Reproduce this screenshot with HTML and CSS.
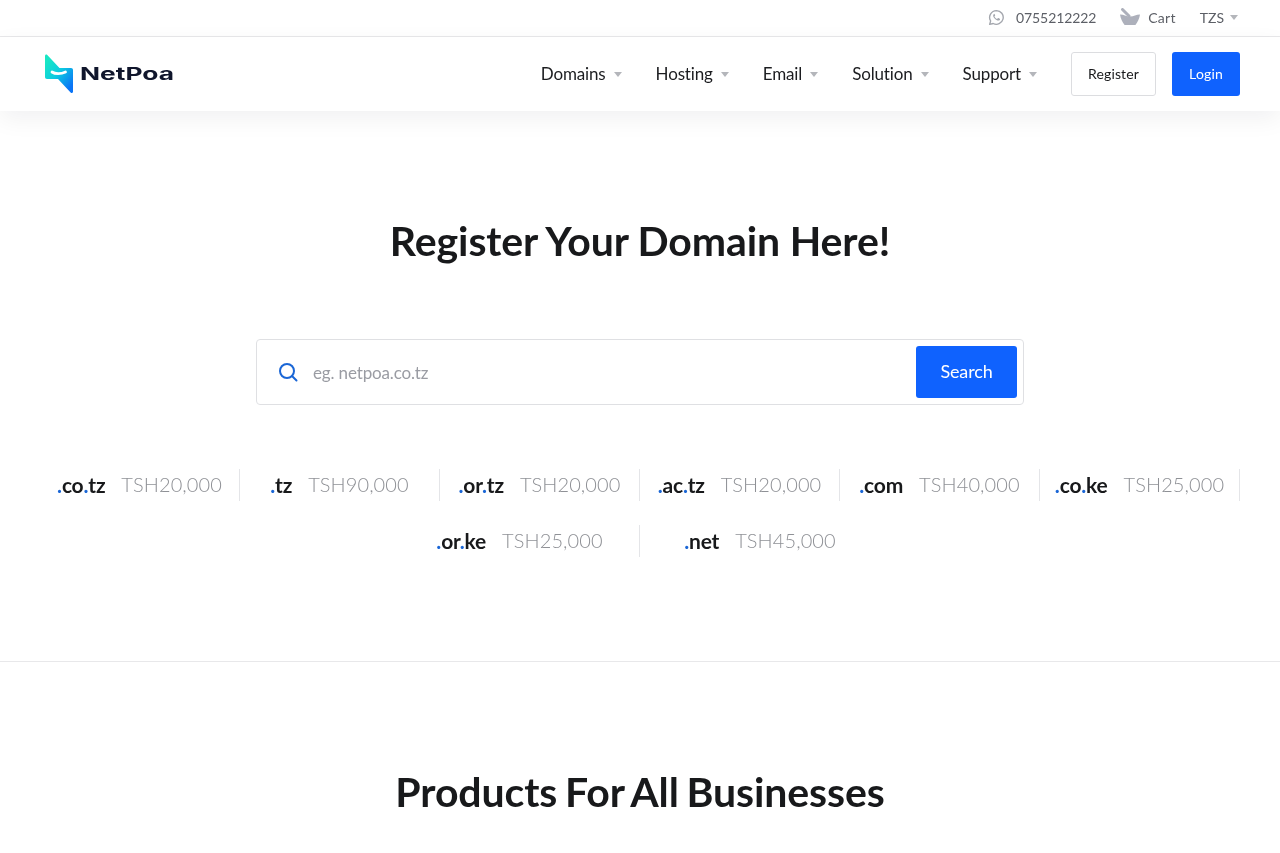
FILE: index.html
```html
<!DOCTYPE html>
<html lang="en">
<head>
<meta charset="utf-8">
<title>NetPoa</title>
<link rel="stylesheet" href="styles.css">
</head>
<body>
<div class="topbar">
  <a class="top-item"><svg class="ico-wa" viewBox="0 0 24 24"><path d="M12 2.200a9.700 9.700 0 0 0-8.300 14.700L2.300 21.800l5-1.300A9.700 9.700 0 1 0 12 2.200z" fill="none" stroke="#a3a6ad" stroke-width="1.900" stroke-linejoin="round"/><path d="M8.800 7.200c-.5 0-1.500.8-1.500 2.300 0 1.500 1 3 2.400 4.400 1.500 1.400 3.200 2.500 4.800 2.500 1.500 0 2.500-1.100 2.500-2 0-.4-.1-.6-.3-.7l-2.100-1c-.3-.1-.5 0-.7.200l-.8 1c-.2.200-.4.200-.6.100-1.500-.7-2.600-1.800-3.300-3.100-.1-.2-.1-.4.100-.6l.7-.8c.1-.2.200-.4.100-.6l-.9-2c-.1-.1-.2-.1-.4-.1z" fill="#a3a6ad"/></svg><span class="phone">0755212222</span></a>
  <a class="top-item cart"><svg class="ico-cart" viewBox="0 0 20 18"><path d="M0 6.500c4 0 6 2 10 2s6-2 10-2c-.6 4-2.400 7.800-4.600 10.500H4.600C2.400 14.300.6 10.500 0 6.500z" fill="#adb0bb"/><path d="M2.500 1.500l6.500 6.500" stroke="#adb0bb" stroke-width="3" stroke-linecap="round"/></svg><span class="cart-label">Cart</span></a>
  <a class="top-item cur"><span>TZS</span><i class="caret small"></i></a>
</div>
<header class="header">
  <a class="logo">
    <svg class="logo-mark" viewBox="0 0 28 40">
      <defs><linearGradient id="lg" x1="0.150" y1="0.100" x2="0.850" y2="0.900"><stop offset="0" stop-color="#18e6c4"/><stop offset="0.450" stop-color="#0ccde0"/><stop offset="1" stop-color="#0a74f6"/></linearGradient></defs>
      <path d="M0 2c0-1.400 1.300-2 2.300-1L14.500 14H26c1.200 0 2 .8 2 2v21.500c0 1.500-1.500 2-2.400 1L13 25H2c-1.200 0-2-.8-2-2z" fill="url(#lg)"/>
      <path d="M7 18c3 2.200 9 2.200 13.500 0" fill="none" stroke="#fff" stroke-width="2.800" stroke-linecap="round"/>
    </svg>
    <svg class="logo-word" viewBox="0 0 94 20"><text x="0" y="16" textLength="94" lengthAdjust="spacingAndGlyphs">NetPoa</text></svg>
  </a>
  <nav class="nav">
    <a class="nav-item">Domains<i class="caret"></i></a>
    <a class="nav-item">Hosting<i class="caret"></i></a>
    <a class="nav-item">Email<i class="caret"></i></a>
    <a class="nav-item">Solution<i class="caret"></i></a>
    <a class="nav-item">Support<i class="caret"></i></a>
  </nav>
  <a class="btn btn-outline">Register</a>
  <a class="btn btn-primary">Login</a>
</header>
<main>
  <section class="hero">
    <h1>Register Your Domain Here!</h1>
    <form class="search">
      <svg class="ico-search" viewBox="0 0 20 20"><circle cx="9" cy="9" r="7" fill="none" stroke="#1a66d6" stroke-width="2"/><path d="M14 14l4.500 4.500" stroke="#1a66d6" stroke-width="2" stroke-linecap="round"/></svg>
      <span class="placeholder">eg. netpoa.co.tz</span>
      <a class="search-btn">Search</a>
    </form>
    <div class="tlds">
      <div class="tld"><b><u>.</u>co<u>.</u>tz</b><span>TSH20,000</span></div>
      <div class="tld"><b><u>.</u>tz</b><span>TSH90,000</span></div>
      <div class="tld"><b><u>.</u>or<u>.</u>tz</b><span>TSH20,000</span></div>
      <div class="tld"><b><u>.</u>ac<u>.</u>tz</b><span>TSH20,000</span></div>
      <div class="tld"><b><u>.</u>com</b><span>TSH40,000</span></div>
      <div class="tld"><b><u>.</u>co<u>.</u>ke</b><span>TSH25,000</span></div>
      <div class="tld wide"><b><u>.</u>or<u>.</u>ke</b><span>TSH25,000</span></div>
      <div class="tld wide last"><b><u>.</u>net</b><span>TSH45,000</span></div>
    </div>
  </section>
  <section class="products">
    <h2>Products For All Businesses</h2>
  </section>
</main>
</body>
</html>
```
FILE: styles.css
```css
* { box-sizing: border-box; }
html, body { margin: 0; padding: 0; background: #fff; }
body { font-family: Lato, "Liberation Sans", sans-serif; color: #18191b; overflow: hidden; height: 853px; }
a { color: inherit; text-decoration: none; }

.topbar, main { will-change: opacity; }
.topbar { height: 37px; border-bottom: 1px solid #e8e8ea; display: flex; justify-content: flex-end; align-items: center; padding: 0 42px 1px 0; gap: 24px; font-size: 14px; color: #5c5f66; }
.top-item { display: flex; align-items: center; }
.phone { letter-spacing: -0.100px; }
.cart-label { letter-spacing: 0.250px; }
.ico-wa { width: 17px; height: 17px; margin-right: 11px; }
.ico-cart { width: 20px; height: 18px; margin-right: 8px; margin-top: -2px; }
.caret { display: inline-block; width: 0; height: 0; border-left: 4px solid transparent; border-right: 4px solid transparent; border-top: 5px solid #b4b6bb; margin-left: 8px; }
.caret.small { margin-left: 6px; }

.header { height: 74px; display: flex; align-items: center; padding: 0 40px 0 45px; box-shadow: 0 8px 24px rgba(20, 24, 40, 0.06); position: relative; z-index: 1; will-change: opacity; }
.logo { display: flex; align-items: center; margin-right: auto; }
.logo-mark { width: 28px; height: 40px; }
.logo-word { width: 94px; height: 20px; margin-left: 7px; margin-top: -1px; }
.logo-word text { font-family: Inter, sans-serif; font-weight: 700; font-size: 17px; fill: #10162c; }
.nav { display: flex; gap: 34px; margin-right: 34px; }
.nav-item { font-size: 17px; letter-spacing: -0.150px; display: flex; align-items: center; padding-bottom: 2px; color: #1c1d20; }
.nav-item .caret { margin-top: 2px; }
.btn { height: 44px; display: flex; align-items: center; justify-content: center; font-size: 14px; letter-spacing: 0.150px; border-radius: 3px; padding-bottom: 2px; }
.btn-outline { width: 85px; border: 1px solid #dcdde0; margin-right: 16px; }
.btn-primary { width: 68px; background: #0f62fe; color: #fff; }

.hero { height: 551px; border-bottom: 1px solid #e8e8ea; padding-top: 105px; display: flex; flex-direction: column; align-items: center; }
h1, h2 { margin: 0; font-size: 41px; line-height: 50px; font-weight: 700; letter-spacing: -0.100px; color: #18191b; text-align: center; }
h1 { word-spacing: -0.300px; }
h2 { word-spacing: -2.200px; }
.search { width: 768px; height: 66px; margin-top: 73px; border: 1px solid #dfe0e3; border-radius: 4px; display: flex; align-items: center; padding: 0 6px 0 21px; }
.ico-search { width: 20px; height: 20px; margin-right: 15px; }
.placeholder { font-size: 17px; letter-spacing: -0.150px; color: #9a9ca3; margin-right: auto; }
.search-btn { width: 101px; height: 52px; background: #0f62fe; color: #fff; font-size: 18px; letter-spacing: -0.150px; border-radius: 3px; display: flex; align-items: center; justify-content: center; padding-bottom: 2px; }

.tlds { width: 1200px; margin-top: 64px; display: flex; flex-wrap: wrap; justify-content: center; row-gap: 24px; }
.tld { width: 200px; height: 32px; display: flex; align-items: center; justify-content: center; gap: 16px; border-right: 1px solid #e4e5e8; padding-bottom: 2px; }
.tld.wide { width: 240px; }
.tld.last { border-right: 0; }
.tld b { font-size: 21px; font-weight: 700; letter-spacing: -0.200px; color: #18191b; }
.tld u { text-decoration: none; color: #1a66d6; }
.tld span { font-size: 20px; letter-spacing: 0.100px; font-weight: 300; color: #8f9196; }

.products { padding-top: 105px; }
```
